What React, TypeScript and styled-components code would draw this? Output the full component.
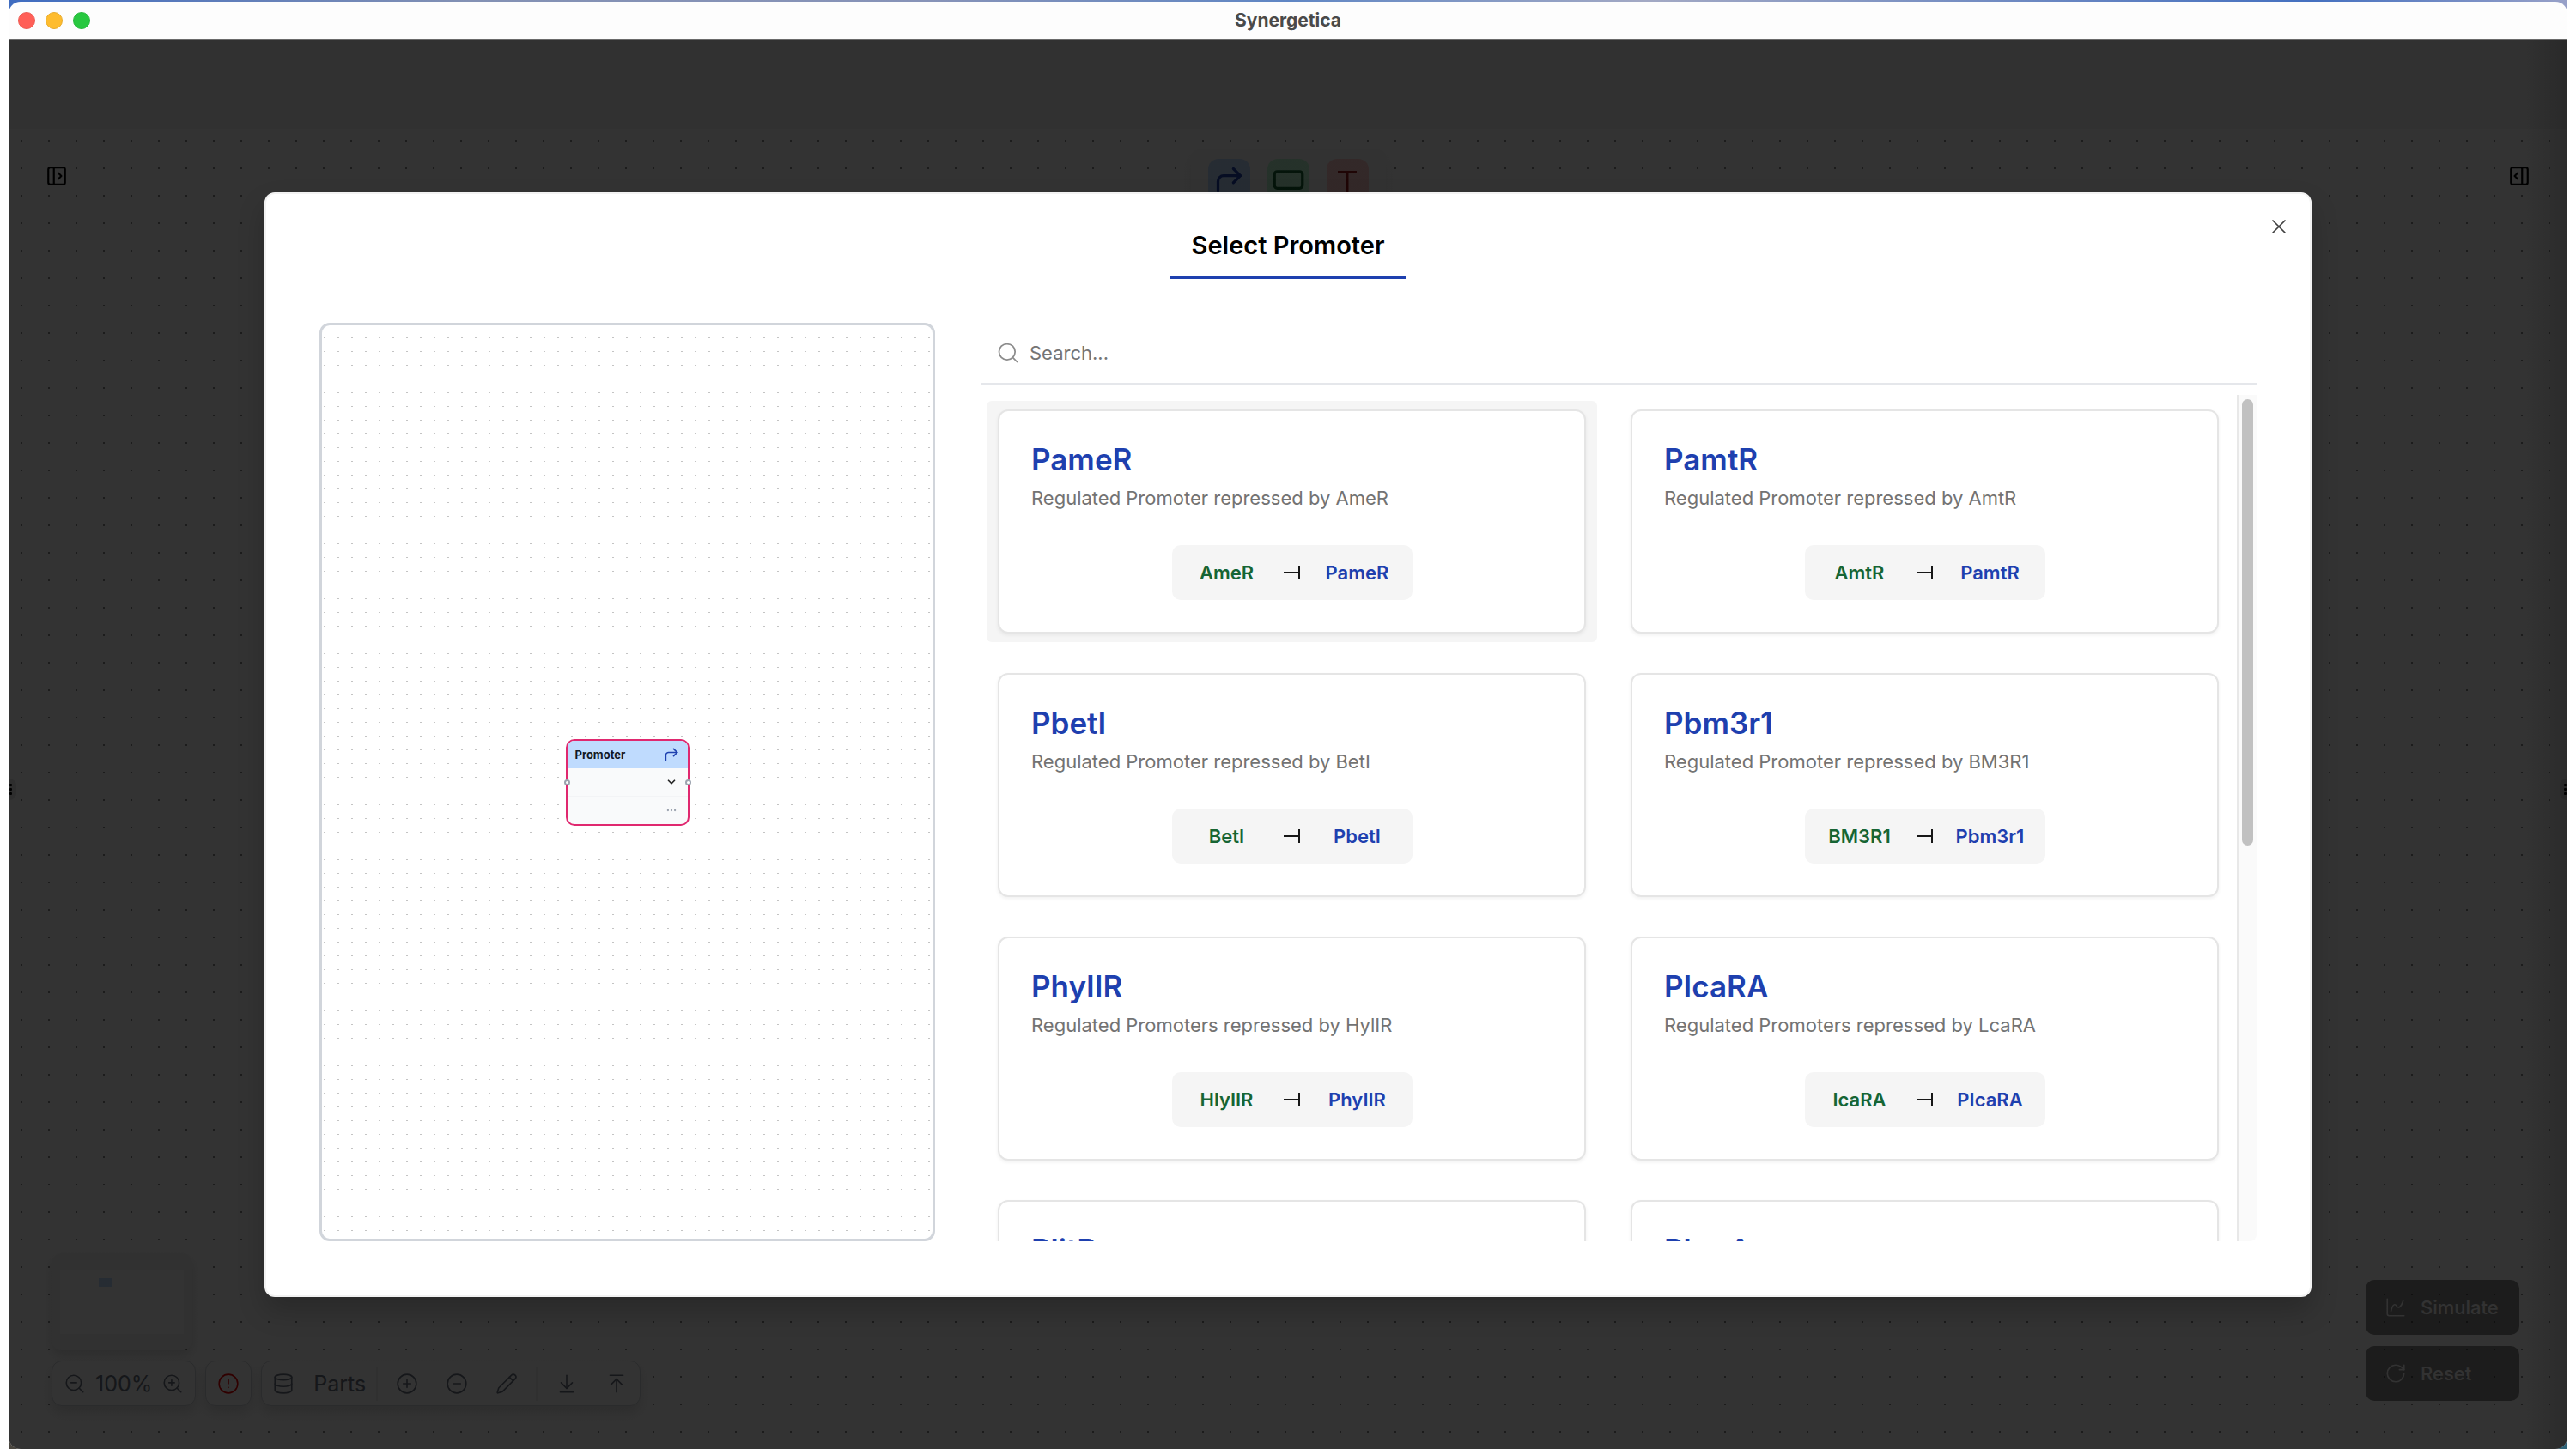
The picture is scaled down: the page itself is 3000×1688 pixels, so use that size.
import React from "react";
import styled, { createGlobalStyle } from "styled-components";
import {
  ArrowDownToLine,
  ArrowUpToLine,
  ChartSpline,
  ChevronDown,
  CircleAlert,
  CircleMinus,
  CirclePlus,
  CornerUpRight,
  Database,
  Ellipsis,
  PanelLeftOpen,
  PanelRightOpen,
  Pencil,
  RectangleHorizontal,
  RotateCw,
  Search,
  X,
  ZoomIn,
  ZoomOut,
} from "lucide-react";

const GlobalStyle = createGlobalStyle`
  *, *::before, *::after { box-sizing: border-box; }
  body {
    margin: 0;
    background: #ffffff;
    color: #0a0a0a;
    font-family: Inter, "Liberation Sans", sans-serif;
  }
  button, input, select { font: inherit; color: inherit; }
  button { border: 0; padding: 0; background: none; cursor: pointer; }
  h1, h2, h3, p { margin: 0; }
  svg { display: block; flex: none; }
`;

/* ---------- window ---------- */

const Desktop = styled.div`
  height: 100vh;
  padding: 0 10px;
`;

const Wallpaper = styled.div`
  height: 100%;
  padding-top: 2px;
  background:
    linear-gradient(90deg, #3f6cc0, #8391b4 18%, #8793b8 36%, #5f86c4 50%, #a3a9c4 64%, #4470c0 90%, #98a1c8) top / 100% 24px no-repeat,
    linear-gradient(90deg, #4a463f, #2f6378);
`;

const Window = styled.div`
  height: 100%;
  display: flex;
  flex-direction: column;
  overflow: hidden;
  border-radius: 14px;
`;

const TitleBar = styled.header`
  display: grid;
  grid-template-columns: 1fr auto 1fr;
  align-items: center;
  height: 45px;
  flex: none;
  padding: 0 11px;
  background: #fdfdfd;
  border-bottom: 1px solid #6b6b6b;
`;

const Lights = styled.div`
  display: flex;
  gap: 12px;
`;

const Light = styled.button<{ $fill: string; $ring: string }>`
  width: 20px;
  height: 20px;
  border-radius: 50%;
  background: ${(p) => p.$fill};
  border: 1px solid ${(p) => p.$ring};
`;

const WindowTitle = styled.h1`
  font-size: 21px;
  line-height: 28px;
  font-weight: 700;
  color: #4a4a4a;
`;

const Stage = styled.div`
  position: relative;
  flex: 1;
  min-height: 0;
  display: flex;
  flex-direction: column;
`;

const AppHeader = styled.div`
  height: 103px;
  flex: none;
  background: #f5f5f5;
`;

/* ---------- circuit canvas ---------- */

const Canvas = styled.main`
  position: relative;
  flex: 1;
  min-height: 0;
  display: flex;
  flex-direction: column;
  justify-content: space-between;
  background: radial-gradient(circle, #8a8a8a 1px, transparent 1px) -1px -2px / 32px 32px #ffffff;
`;

const CanvasTop = styled.div`
  display: flex;
  justify-content: space-between;
  align-items: flex-start;
  padding: 23px 24px 0;
`;

const SidebarToggle = styled.button`
  width: 64px;
  height: 64px;
  display: grid;
  place-items: center;
  color: #000000;
`;

const Palette = styled.div`
  display: flex;
  gap: 20px;
  padding: 12px 20px;
  border-radius: 12px;
  background: #fafafa;
  box-shadow: 0 8px 16px rgba(0, 0, 0, 0.08);
`;

const PaletteButton = styled.button<{ $bg: string; $fg: string }>`
  width: 49px;
  height: 49px;
  display: grid;
  place-items: center;
  border-radius: 12px;
  background: ${(p) => p.$bg};
  color: ${(p) => p.$fg};
`;

/* Drag handles of the side panels, laid over both edges of the canvas */
const Resizers = styled.div`
  position: absolute;
  inset: 0;
  display: flex;
  justify-content: space-between;
  align-items: center;
  pointer-events: none;
`;

const Resizer = styled.div<{ $side: "left" | "right" }>`
  display: flex;
  flex-direction: column;
  align-items: ${(p) => (p.$side === "left" ? "flex-start" : "flex-end")};
  justify-content: center;
  gap: 2px;
  width: 9px;
  height: 25px;
  padding: 0 1px;
  border-radius: ${(p) => (p.$side === "left" ? "0 8px 8px 0" : "8px 0 0 8px")};
  background: #e5e5e5;
`;

const Grip = styled.span`
  width: 3px;
  height: 3px;
  border-radius: 1px;
  background: #000000;
`;

const CanvasBottom = styled.div`
  display: flex;
  justify-content: space-between;
  align-items: flex-end;
  padding: 0 56px 50px 50px;
`;

const LeftTools = styled.div`
  display: flex;
  flex-direction: column;
  gap: 12px;
`;

const MiniMap = styled.div`
  display: grid;
  place-items: center;
  width: 164px;
  height: 113px;
  border-radius: 12px;
  background: #f5f5f5;
  box-shadow: 0 6px 12px rgba(0, 0, 0, 0.12);
`;

const MiniView = styled.div`
  width: 144px;
  height: 75px;
  padding: 10px 45px;
  background: #ffffff;
`;

const MiniNode = styled.div`
  width: 15px;
  height: 10px;
  background: #bfdbfe;
`;

const ToolRow = styled.div`
  display: flex;
  gap: 11px;
`;

const ToolBox = styled.div<{ $gap: number; $pad: number }>`
  display: flex;
  align-items: center;
  gap: ${(p) => p.$gap}px;
  height: 53px;
  padding: 0 ${(p) => p.$pad}px;
  border: 1px solid #d1d5db;
  border-radius: 12px;
  background: #ffffff;
  box-shadow: 0 8px 14px rgba(0, 0, 0, 0.12);
  color: #6b7280;
  font-size: 25px;
  line-height: 32px;
`;

const ToolButton = styled.button<{ $width: number }>`
  width: ${(p) => p.$width}px;
  height: 50px;
  display: grid;
  place-items: center;
`;

const PartsButton = styled.button`
  display: flex;
  align-items: center;
  gap: 22px;
  height: 50px;
  width: 126px;
  padding-left: 12px;
`;

const Divider = styled.span`
  width: 2px;
  height: 40px;
  margin: 0 3px;
  background: #eeeeee;
`;

const RunButtons = styled.div`
  display: flex;
  flex-direction: column;
  gap: 13px;
  padding-bottom: 6px;
`;

const RunButton = styled.button`
  display: flex;
  align-items: center;
  gap: 16px;
  width: 179px;
  height: 64px;
  padding: 0 22px;
  border-radius: 10px;
  background: #171717;
  color: #fafafa;
  font-size: 22px;
  line-height: 32px;
  font-weight: 500;
  opacity: 0.5;
`;

/* ---------- dialog ---------- */

const Overlay = styled.div`
  position: absolute;
  inset: 0;
  display: flex;
  padding: 177px 10%;
  background: linear-gradient(to left, rgba(0, 0, 0, 0.83), rgba(0, 0, 0, 0.8) 50px);
`;

const Dialog = styled.section`
  position: relative;
  flex: 1;
  min-width: 0;
  display: flex;
  flex-direction: column;
  gap: 51px;
  padding: 22px 62px 63px;
  border: 2px solid #f2f2f2;
  border-radius: 12px;
  background: #ffffff;
  box-shadow: 0 16px 32px rgba(0, 0, 0, 0.2);
`;

const CloseButton = styled.button`
  position: absolute;
  top: 24px;
  right: 22px;
  color: #404040;
`;

const DialogTitle = styled.h2`
  align-self: center;
  padding: 18px 26px 15px;
  border-bottom: 4px solid #1e40af;
  color: #000000;
  font-size: 29px;
  line-height: 40px;
  font-weight: 600;
`;

const DialogBody = styled.div`
  flex: 1;
  min-height: 0;
  display: grid;
  grid-template-columns: 1fr 2fr;
  grid-template-rows: minmax(0, 1fr);
`;

const PreviewColumn = styled.div`
  display: flex;
  padding-right: 35px;
`;

const Preview = styled.div`
  flex: 1;
  display: grid;
  place-items: center;
  border: 3px solid #d1d5db;
  border-radius: 12px;
  background-color: #ffffff;
  background-image: url("data:image/svg+xml,%3Csvg xmlns='http://www.w3.org/2000/svg' width='16' height='16'%3E%3Crect x='2' y='14' width='2' height='1' fill='%23c4c4c4'/%3E%3C/svg%3E");
`;

const Node = styled.div`
  position: relative;
  width: 144px;
  border: 2px solid #e0286f;
  border-radius: 10px;
  background: #f9fafb;
`;

const NodeHead = styled.div`
  display: flex;
  align-items: center;
  justify-content: space-between;
  height: 32px;
  padding: 0 9px;
  border-radius: 8px 8px 0 0;
  background: #bfdbfe;
  color: #1e40af;
`;

const NodeName = styled.h3`
  color: #111827;
  font-size: 13px;
  line-height: 20px;
  font-weight: 700;
`;

const NodeRow = styled.label`
  display: flex;
  align-items: center;
  height: 32px;
  padding: 0 12px;
  color: #262626;

  & + & {
    height: 33px;
    border-top: 1px solid #f3f4f6;
    color: #9ca3af;
  }
`;

const NodeSelect = styled.select`
  flex: 1;
  min-width: 0;
  height: 24px;
  appearance: none;
  border: 0;
  background: none;
  font-size: 12px;
`;

const NodeInput = styled.input`
  flex: 1;
  min-width: 0;
  height: 24px;
  border: 0;
  padding: 0;
  background: none;
  font-size: 12px;
`;

const Port = styled.span<{ $side: "left" | "right" }>`
  position: absolute;
  top: 45px;
  ${(p) => p.$side}: -4px;
  width: 7px;
  height: 7px;
  border: 2px solid #9ca3af;
  border-radius: 50%;
  background: #ffffff;
`;

const ListColumn = styled.div`
  display: flex;
  flex-direction: column;
  gap: 12px;
  min-height: 0;
  padding-left: 18px;
`;

const SearchBar = styled.label`
  display: flex;
  align-items: center;
  gap: 11px;
  height: 72px;
  flex: none;
  padding: 0 18px;
  border-bottom: 2px solid #e5e7eb;
  color: #8c8c8c;
`;

const SearchInput = styled.input`
  flex: 1;
  border: 0;
  padding: 0;
  outline: none;
  background: none;
  color: #171717;
  font-size: 22px;
  line-height: 32px;

  &::placeholder {
    color: #757575;
    opacity: 1;
  }
`;

const ScrollArea = styled.div`
  flex: 1;
  min-height: 0;
  display: flex;
  overflow: hidden;
`;

const CardGrid = styled.div`
  flex: 1;
  display: grid;
  grid-template-columns: 1fr 1fr;
  gap: 26px;
  align-content: start;
  padding: 7px 8px 0 7px;
`;

const ScrollTrack = styled.div`
  width: 23px;
  padding: 5px 4px 0;
  border-left: 2px solid #e8e8e8;
  border-radius: 0 0 8px 0;
  background: #fafafa;
`;

const ScrollThumb = styled.div`
  width: 13px;
  height: 53%;
  border-radius: 7px;
  background: #c1c1c1;
`;

const PartOption = styled.button<{ $active: boolean }>`
  display: block;
  padding: 10px 13px;
  border-radius: 6px;
  background: ${(p) => (p.$active ? "#f5f5f5" : "transparent")};
  text-align: left;
`;

const Card = styled.span`
  display: flex;
  flex-direction: column;
  padding: 37px;
  border: 2px solid #e5e5e5;
  border-radius: 12px;
  background: #ffffff;
  box-shadow: 0 2px 4px rgba(0, 0, 0, 0.06);
`;

const CardTitle = styled.span`
  color: #1e40af;
  font-size: 35px;
  line-height: 38px;
  font-weight: 600;
`;

const CardText = styled.span`
  margin-top: 10px;
  color: #737373;
  font-size: 22px;
  line-height: 32px;
`;

const Relation = styled.span`
  align-self: center;
  display: grid;
  grid-template-columns: 104px 48px 104px;
  justify-content: center;
  align-content: center;
  place-items: center;
  width: 280px;
  height: 64px;
  margin-top: 39px;
  border-radius: 10px;
  background: #f5f5f5;
`;

const Gene = styled.span<{ $color: string }>`
  color: ${(p) => p.$color};
  font-size: 22px;
  line-height: 32px;
  font-weight: 600;
`;

const parts = [
  { name: "PameR", text: "Regulated Promoter repressed by AmeR", by: "AmeR" },
  { name: "PamtR", text: "Regulated Promoter repressed by AmtR", by: "AmtR" },
  { name: "PbetI", text: "Regulated Promoter repressed by BetI", by: "BetI" },
  { name: "Pbm3r1", text: "Regulated Promoter repressed by BM3R1", by: "BM3R1" },
  { name: "PhyIIR", text: "Regulated Promoters repressed by HylIR", by: "HlyIIR" },
  { name: "PIcaRA", text: "Regulated Promoters repressed by LcaRA", by: "IcaRA" },
  { name: "PlitR", text: "Regulated Promoter repressed by LitR", by: "LitR" },
  { name: "PlmrA", text: "Regulated Promoter repressed by LmrA", by: "LmrA" },
];

const Represses = () => (
  <svg width="20" height="16" viewBox="0 0 20 16" fill="none" stroke="#171717" strokeWidth="2" aria-label="represses">
    <path d="M0 8H18M18 0V16" />
  </svg>
);

const Terminator = () => (
  <svg width="38" height="38" viewBox="0 0 38 38" fill="none" stroke="currentColor" strokeWidth="3" aria-hidden="true">
    <path d="M8 9.500H30M19 9.500V34" />
  </svg>
);

const toolIcon = { size: 26, strokeWidth: 1.5 };

export default function App() {
  return (
    <>
      <GlobalStyle />
      <Desktop>
        <Wallpaper>
          <Window>
            <TitleBar>
              <Lights>
                <Light $fill="#ff5f57" $ring="#ec5a52" aria-label="Close window" />
                <Light $fill="#febc2e" $ring="#e8ab2c" aria-label="Minimize window" />
                <Light $fill="#28c840" $ring="#27b83c" aria-label="Zoom window" />
              </Lights>
              <WindowTitle>Synergetica</WindowTitle>
            </TitleBar>

            <Stage>
              <AppHeader />
              <Canvas>
                <CanvasTop>
                  <SidebarToggle aria-label="Open left panel">
                    <PanelLeftOpen size={26} />
                  </SidebarToggle>
                  <Palette>
                    <PaletteButton $bg="#bfdbfe" $fg="#1e40af" aria-label="Promoter">
                      <CornerUpRight size={39} />
                    </PaletteButton>
                    <PaletteButton $bg="#bbf7d0" $fg="#166534" aria-label="Protein">
                      <RectangleHorizontal size={39} />
                    </PaletteButton>
                    <PaletteButton $bg="#fecaca" $fg="#991b1b" aria-label="Terminator">
                      <Terminator />
                    </PaletteButton>
                  </Palette>
                  <SidebarToggle aria-label="Open right panel">
                    <PanelRightOpen size={26} />
                  </SidebarToggle>
                </CanvasTop>

                <Resizers>
                  <Resizer $side="left"><Grip /><Grip /><Grip /></Resizer>
                  <Resizer $side="right"><Grip /><Grip /><Grip /></Resizer>
                </Resizers>

                <CanvasBottom>
                  <LeftTools>
                    <MiniMap>
                      <MiniView><MiniNode /></MiniView>
                    </MiniMap>
                    <ToolRow>
                      <ToolBox $gap={11} $pad={13}>
                        <button aria-label="Zoom out"><ZoomOut {...toolIcon} /></button>
                        <span>100%</span>
                        <button aria-label="Zoom in"><ZoomIn {...toolIcon} /></button>
                      </ToolBox>
                      <ToolBox $gap={0} $pad={0}>
                        <ToolButton $width={52} aria-label="Problems">
                          <CircleAlert {...toolIcon} color="#ef0000" />
                        </ToolButton>
                      </ToolBox>
                      <ToolBox $gap={4} $pad={0}>
                        <PartsButton>
                          <Database {...toolIcon} />
                          Parts
                        </PartsButton>
                        <Divider />
                        <ToolButton $width={54} aria-label="Add part"><CirclePlus {...toolIcon} /></ToolButton>
                        <ToolButton $width={54} aria-label="Remove part"><CircleMinus {...toolIcon} /></ToolButton>
                        <ToolButton $width={54} aria-label="Edit part"><Pencil {...toolIcon} /></ToolButton>
                        <Divider />
                        <ToolButton $width={54} aria-label="Import"><ArrowDownToLine {...toolIcon} /></ToolButton>
                        <ToolButton $width={54} aria-label="Export"><ArrowUpToLine {...toolIcon} /></ToolButton>
                      </ToolBox>
                    </ToolRow>
                  </LeftTools>
                  <RunButtons>
                    <RunButton><ChartSpline {...toolIcon} />Simulate</RunButton>
                    <RunButton><RotateCw {...toolIcon} />Reset</RunButton>
                  </RunButtons>
                </CanvasBottom>
              </Canvas>

              <Overlay>
                <Dialog role="dialog" aria-labelledby="dialog-title">
                  <CloseButton aria-label="Close">
                    <X size={28} strokeWidth={1.5} />
                  </CloseButton>
                  <DialogTitle id="dialog-title">Select Promoter</DialogTitle>
                  <DialogBody>
                    <PreviewColumn>
                      <Preview>
                        <Node>
                          <NodeHead>
                            <NodeName>Promoter</NodeName>
                            <CornerUpRight size={20} />
                          </NodeHead>
                          <NodeRow>
                            <NodeSelect aria-label="Promoter part" />
                            <ChevronDown size={14} strokeWidth={3} />
                          </NodeRow>
                          <NodeRow>
                            <NodeInput aria-label="Promoter controller" />
                            <Ellipsis size={14} />
                          </NodeRow>
                          <Port $side="left" />
                          <Port $side="right" />
                        </Node>
                      </Preview>
                    </PreviewColumn>

                    <ListColumn>
                      <SearchBar>
                        <Search size={28} strokeWidth={1.5} />
                        <SearchInput type="text" placeholder="Search..." aria-label="Search parts" />
                      </SearchBar>
                      <ScrollArea>
                        <CardGrid>
                          {parts.map((part, i) => (
                            <PartOption key={part.name} $active={i === 0}>
                              <Card>
                                <CardTitle>{part.name}</CardTitle>
                                <CardText>{part.text}</CardText>
                                <Relation>
                                  <Gene $color="#166534">{part.by}</Gene>
                                  <Represses />
                                  <Gene $color="#1e40af">{part.name}</Gene>
                                </Relation>
                              </Card>
                            </PartOption>
                          ))}
                        </CardGrid>
                        <ScrollTrack>
                          <ScrollThumb />
                        </ScrollTrack>
                      </ScrollArea>
                    </ListColumn>
                  </DialogBody>
                </Dialog>
              </Overlay>
            </Stage>
          </Window>
        </Wallpaper>
      </Desktop>
    </>
  );
}
